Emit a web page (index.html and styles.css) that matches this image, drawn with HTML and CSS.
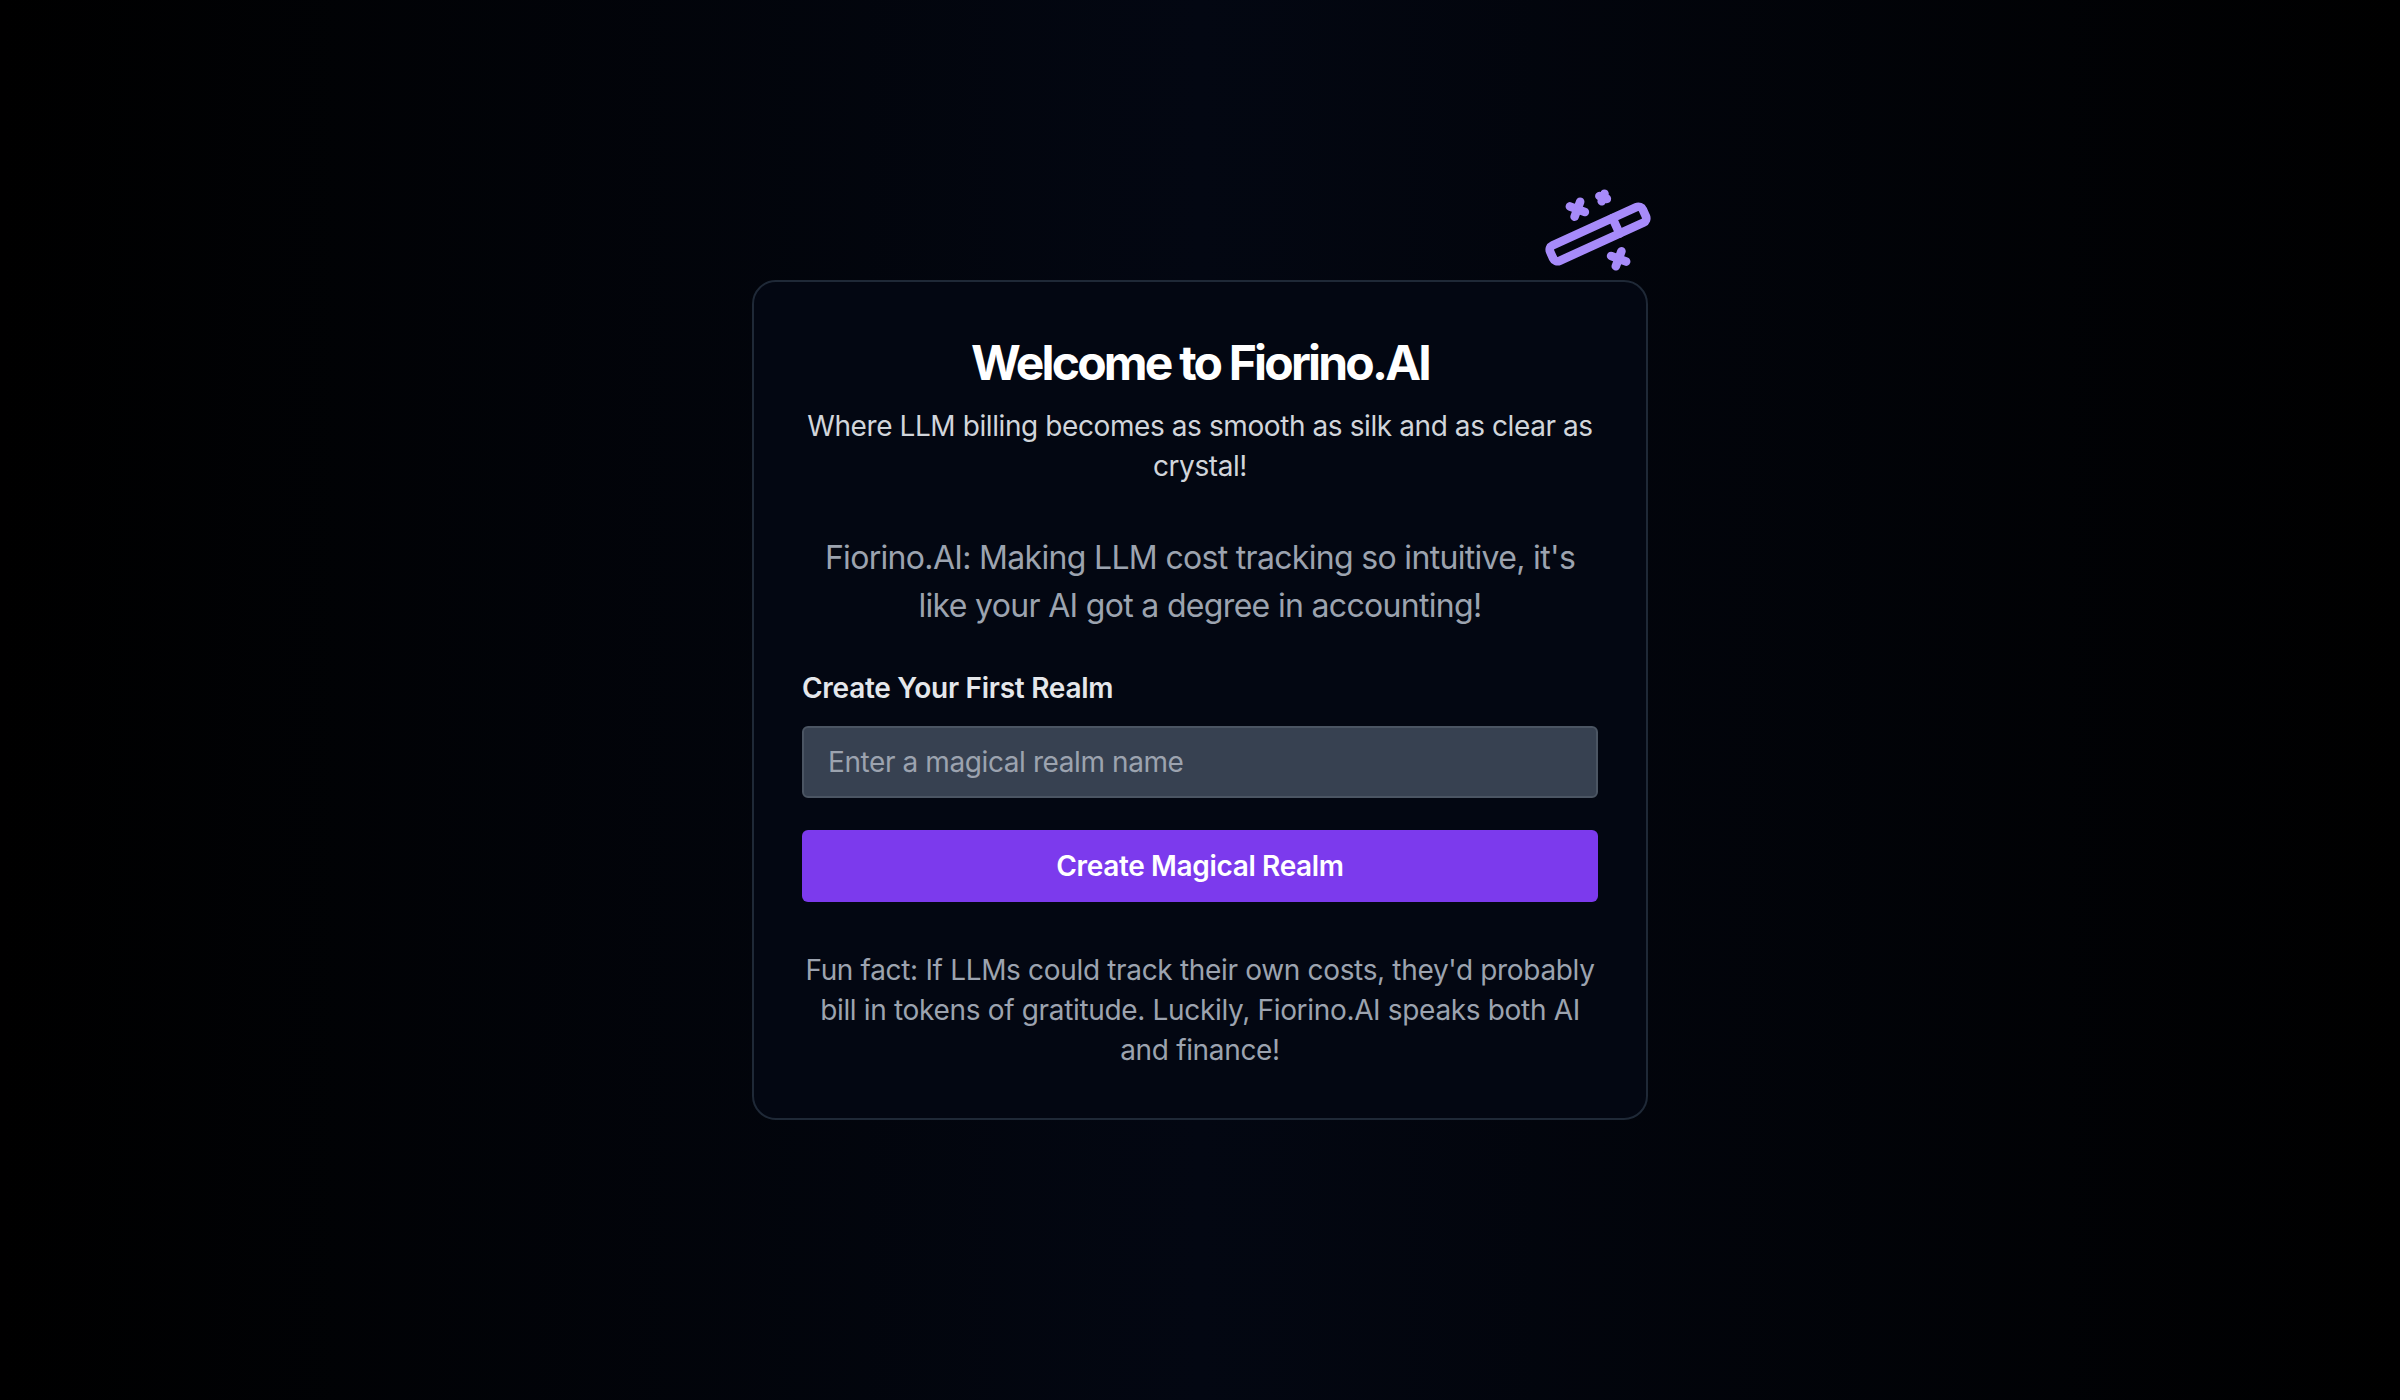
FILE: index.html
```html
<!DOCTYPE html>
<html lang="en">
<head>
<meta charset="utf-8">
<title>Fiorino.AI</title>
<link rel="stylesheet" href="styles.css">
</head>
<body>
<main class="page">
  <section class="card">
    <svg class="wand" viewBox="0 0 24 24" fill="none" stroke="currentColor" stroke-width="2.15" stroke-linecap="round" stroke-linejoin="round" aria-hidden="true">
      <path d="m21.64 3.64-1.28-1.28a1.21 1.21 0 0 0-1.72 0L2.36 18.64a1.21 1.21 0 0 0 0 1.72l1.28 1.28a1.2 1.2 0 0 0 1.72 0L21.64 5.36a1.2 1.2 0 0 0 0-1.72"/>
      <path d="m14 7 3 3"/>
      <path d="M5 6v4"/>
      <path d="M19 14v4"/>
      <path d="M10 2v2"/>
      <path d="M7 8H3"/>
      <path d="M21 16h-4"/>
      <path d="M11 3H9"/>
    </svg>
    <header class="card-header">
      <h1 class="title">Welcome to Fiorino.AI</h1>
      <p class="subtitle">Where LLM billing becomes as smooth as silk and as clear as crystal!</p>
    </header>
    <p class="intro">Fiorino.AI: Making LLM cost tracking so intuitive, it's like your AI got a degree in accounting!</p>
    <form class="form">
      <label class="label" for="realm">Create Your First Realm</label>
      <input class="input" id="realm" type="text" placeholder="Enter a magical realm name">
      <button class="button" type="button">Create Magical Realm</button>
    </form>
    <p class="fact">Fun fact: If LLMs could track their own costs, they'd probably bill in tokens of gratitude. Luckily, Fiorino.AI speaks both AI and finance!</p>
  </section>
</main>
</body>
</html>
```
FILE: styles.css
```css
*, *::before, *::after {
  box-sizing: border-box;
}

body {
  margin: 0;
  font-family: Inter, "Liberation Sans", sans-serif;
  font-size: 28px;
  font-weight: 440;
  line-height: 40px;
  letter-spacing: -0.41px;
  color: #fff;
  background: #000;
}

h1, p {
  margin: 0;
}

.page {
  display: flex;
  align-items: center;
  justify-content: center;
  min-height: 100vh;
  background: linear-gradient(to right, #000, #030712, #000);
}

.card {
  position: relative;
  width: 896px;
  padding: 48px;
  border: 2px solid #1f2937;
  border-radius: 24px;
  background: #030712;
}

.wand {
  position: absolute;
  top: -96px;
  right: 0;
  width: 96px;
  height: 96px;
  color: #a78bfa;
  transform: rotate(20.5deg);
}

.card-header {
  display: flex;
  flex-direction: column;
  gap: 11px;
  text-align: center;
}

.title {
  padding-top: 1px;
  font-size: 48px;
  line-height: 64px;
  font-weight: 720;
  letter-spacing: -2.8px;
}

.subtitle {
  color: #d1d5db;
}

.intro {
  margin-top: 48px;
  font-size: 32px;
  line-height: 48px;
  letter-spacing: -0.68px;
  text-align: center;
  color: #9ca3af;
}

.form {
  display: flex;
  flex-direction: column;
  margin-top: 38px;
}

.label {
  font-weight: 580;
  letter-spacing: -0.27px;
  color: #e5e7eb;
}

.input {
  height: 72px;
  margin-top: 18px;
  padding: 0 24px;
  border: 2px solid #4b5563;
  border-radius: 6px;
  background: #374151;
  font: inherit;
  letter-spacing: inherit;
  color: #fff;
}

.input::placeholder {
  color: #9ca3af;
}

.button {
  height: 72px;
  margin-top: 32px;
  padding: 0;
  border: 0;
  border-radius: 6px;
  background: #7c3aed;
  font: inherit;
  font-weight: 580;
  letter-spacing: -0.35px;
  color: #fff;
}

.fact {
  margin-top: 48px;
  letter-spacing: -0.33px;
  text-align: center;
  color: #9ca3af;
}
```
